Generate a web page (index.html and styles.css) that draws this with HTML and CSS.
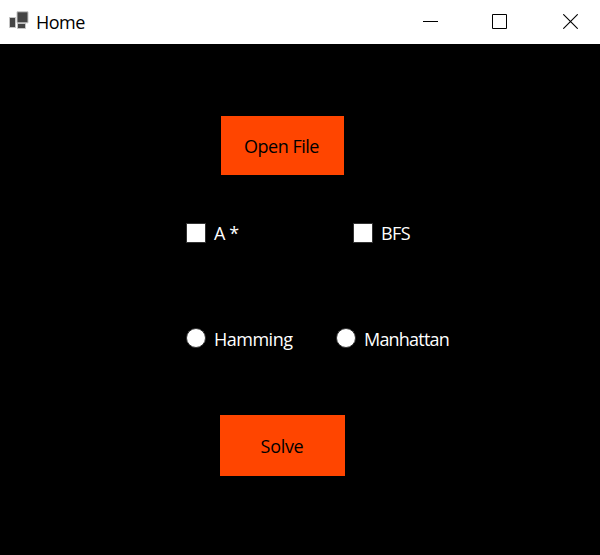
FILE: index.html
```
<!DOCTYPE html>
<html lang="en">
<head>
<meta charset="utf-8">
<title>Home</title>
<link rel="stylesheet" href="styles.css">
</head>
<body>
<header class="titlebar">
  <svg class="app-icon" width="20" height="20" viewBox="0 0 20 20"><g fill="#444" stroke="#c4c4c4"><path d="M.5 6.500h6v10h-6z"/><path d="M8.500 12.500h8v5h-8z"/><path d="M8 .8h11v11H8z"/></g></svg>
  <h1 class="title"><span class="home">Home</span></h1>
  <svg class="minimize" width="15" height="15"><path d="M0 7.500h15" stroke="#000"/></svg>
  <svg class="maximize" width="15" height="15"><path d="M.5 .5h14v14H.5z" fill="none" stroke="#000"/></svg>
  <svg class="close" width="15" height="15"><path d="M.3 .3l14.400 14.400M14.700 .3L.3 14.700" stroke="#000" stroke-width="1.100"/></svg>
</header>
<main class="form">
  <button class="button open"><span class="open-text">Open File</span></button>
  <div class="options algorithms">
    <label class="option"><input class="check" type="checkbox"><span class="astar">A *</span></label>
    <label class="option"><input class="check" type="checkbox"><span class="bfs">BFS</span></label>
  </div>
  <div class="options heuristics">
    <label class="option"><input class="check radio" type="radio" name="heuristic"><span class="hamming">Hamming</span></label>
    <label class="option"><input class="check radio" type="radio" name="heuristic"><span class="manhattan">Manhattan</span></label>
  </div>
  <button class="button solve"><span class="solve-text">Solve</span></button>
</main>
</body>
</html>
```
FILE: styles.css
```
* { box-sizing: border-box; }
body { margin: 0; height: 555px; overflow: hidden; background: #000; color: #fff; font: 18px/24px "Open Sans", "Noto Sans", sans-serif; }
.titlebar { display: flex; align-items: flex-start; height: 44px; background: #fff; color: #000; }
.titlebar svg { flex: none; }
.app-icon { margin: 11px 0 0 9px; }
.title { width: 387px; margin: 10px 0 0 7px; font-size: 18px; font-weight: 400; }
.minimize { margin-top: 14px; }
.maximize { margin: 14px 0 0 54px; }
.close { margin: 14px 0 0 56px; }
.form { display: flex; flex-direction: column; align-items: flex-start; padding-top: 72px; }
.button { border: 0; padding: 1px 0 0; background: #ff4500; color: #000; font: inherit; }
.open { width: 123px; height: 59px; margin-left: 221px; padding-right: 2px; }
.solve { width: 125px; height: 61px; margin: 64px 0 0 220px; padding-right: 1px; }
.options { display: grid; margin-left: 186px; height: 24px; }
.algorithms { grid-template-columns: 167px 100px; margin-top: 46px; }
.heuristics { grid-template-columns: 150px 120px; margin-top: 82px; }
.option { display: flex; align-items: flex-start; gap: 8px; white-space: nowrap; }
.check { appearance: none; flex: none; width: 20px; height: 20px; margin: 2px 0 0; border: 1px solid #333; background: #fff; }
.radio { margin-top: 1px; border-radius: 50%; }
.home { letter-spacing: -.5px; }
.open-text { letter-spacing: -.5px; }
.astar { letter-spacing: -.4px; }
.bfs { letter-spacing: -.6px; }
.hamming { letter-spacing: -.5px; }
.manhattan { letter-spacing: -.8px; }
.solve-text { letter-spacing: -.3px; }
```
